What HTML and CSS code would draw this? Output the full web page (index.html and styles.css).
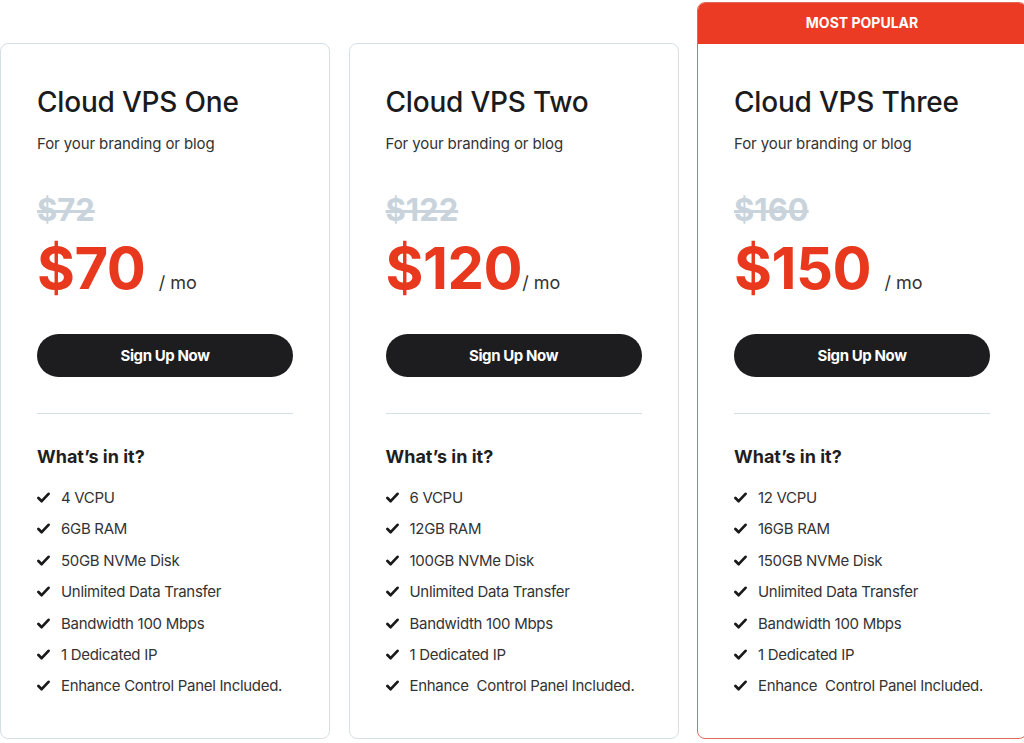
FILE: index.html
```html
<!DOCTYPE html>
<html lang="en">
<head>
  <meta charset="UTF-8" />
  <meta name="viewport" content="width=device-width, initial-scale=1.0"/>
  <title>Cloud VPS Pricing</title>
  <link rel="stylesheet" href="styles.css">
</head>
<body>
  <div class="plans">
    <div class="plan">
      <div class="plan-body">
        <h2 class="plan-name">Cloud VPS One</h2>
        <p class="plan-desc">For your branding or blog</p>
        <div class="old-price">$72</div>
        <div class="price"><span class="amount">$70 </span><span class="period">/ mo</span></div>
        <button class="signup">Sign Up Now</button>
        <hr class="divider">
        <h3 class="features-title">What’s in it?</h3>
        <ul class="features">
          <li><svg viewBox="0 0 14 12"><path d="M1.5 6.5l3.5 3.5 7.5-8"/></svg>4 VCPU</li>
          <li><svg viewBox="0 0 14 12"><path d="M1.5 6.5l3.5 3.5 7.5-8"/></svg>6GB RAM</li>
          <li><svg viewBox="0 0 14 12"><path d="M1.5 6.5l3.5 3.5 7.5-8"/></svg>50GB NVMe Disk</li>
          <li><svg viewBox="0 0 14 12"><path d="M1.5 6.5l3.5 3.5 7.5-8"/></svg>Unlimited Data Transfer</li>
          <li><svg viewBox="0 0 14 12"><path d="M1.5 6.5l3.5 3.5 7.5-8"/></svg>Bandwidth 100 Mbps</li>
          <li><svg viewBox="0 0 14 12"><path d="M1.5 6.5l3.5 3.5 7.5-8"/></svg>1 Dedicated IP</li>
          <li><svg viewBox="0 0 14 12"><path d="M1.5 6.5l3.5 3.5 7.5-8"/></svg>Enhance Control Panel Included.</li>
        </ul>
      </div>
    </div>

    <div class="plan">
      <div class="plan-body">
        <h2 class="plan-name">Cloud VPS Two</h2>
        <p class="plan-desc">For your branding or blog</p>
        <div class="old-price">$122</div>
        <div class="price"><span class="amount">$120</span><span class="period">/ mo</span></div>
        <button class="signup">Sign Up Now</button>
        <hr class="divider">
        <h3 class="features-title">What’s in it?</h3>
        <ul class="features">
          <li><svg viewBox="0 0 14 12"><path d="M1.5 6.5l3.5 3.5 7.5-8"/></svg>6 VCPU</li>
          <li><svg viewBox="0 0 14 12"><path d="M1.5 6.5l3.5 3.5 7.5-8"/></svg>12GB RAM</li>
          <li><svg viewBox="0 0 14 12"><path d="M1.5 6.5l3.5 3.5 7.5-8"/></svg>100GB NVMe Disk</li>
          <li><svg viewBox="0 0 14 12"><path d="M1.5 6.5l3.5 3.5 7.5-8"/></svg>Unlimited Data Transfer</li>
          <li><svg viewBox="0 0 14 12"><path d="M1.5 6.5l3.5 3.5 7.5-8"/></svg>Bandwidth 100 Mbps</li>
          <li><svg viewBox="0 0 14 12"><path d="M1.5 6.5l3.5 3.5 7.5-8"/></svg>1 Dedicated IP</li>
          <li><svg viewBox="0 0 14 12"><path d="M1.5 6.5l3.5 3.5 7.5-8"/></svg>Enhance&nbsp; Control Panel Included.</li>
        </ul>
      </div>
    </div>

    <div class="plan popular">
      <div class="badge">MOST POPULAR</div>
      <div class="plan-body">
        <h2 class="plan-name">Cloud VPS Three</h2>
        <p class="plan-desc">For your branding or blog</p>
        <div class="old-price">$160</div>
        <div class="price"><span class="amount">$150 </span><span class="period">/ mo</span></div>
        <button class="signup">Sign Up Now</button>
        <hr class="divider">
        <h3 class="features-title">What’s in it?</h3>
        <ul class="features">
          <li><svg viewBox="0 0 14 12"><path d="M1.5 6.5l3.5 3.5 7.5-8"/></svg>12 VCPU</li>
          <li><svg viewBox="0 0 14 12"><path d="M1.5 6.5l3.5 3.5 7.5-8"/></svg>16GB RAM</li>
          <li><svg viewBox="0 0 14 12"><path d="M1.5 6.5l3.5 3.5 7.5-8"/></svg>150GB NVMe Disk</li>
          <li><svg viewBox="0 0 14 12"><path d="M1.5 6.5l3.5 3.5 7.5-8"/></svg>Unlimited Data Transfer</li>
          <li><svg viewBox="0 0 14 12"><path d="M1.5 6.5l3.5 3.5 7.5-8"/></svg>Bandwidth 100 Mbps</li>
          <li><svg viewBox="0 0 14 12"><path d="M1.5 6.5l3.5 3.5 7.5-8"/></svg>1 Dedicated IP</li>
          <li><svg viewBox="0 0 14 12"><path d="M1.5 6.5l3.5 3.5 7.5-8"/></svg>Enhance&nbsp; Control Panel Included.</li>
        </ul>
      </div>
    </div>
  </div>
</body>
</html>
```

FILE: styles.css
```css
body {
  margin: 0;
  background: #ffffff;
  font-family: Inter, "Noto Sans", sans-serif;
  color: #222;
  overflow: hidden;
}

.plans {
  display: flex;
  align-items: flex-end;
  gap: 18.5px;
  padding-top: 2px;
  width: 1100px;
}

.plan {
  width: 330px;
  flex: none;
  box-sizing: border-box;
  border: 1px solid #d5e0e5;
  border-radius: 8px;
  background: #fff;
  overflow: hidden;
}

.popular {
  border-color: #e06a5a;
}

.badge {
  background: #ec3b24;
  color: #fff;
  font-weight: 700;
  font-size: 14px;
  text-align: center;
  height: 41px;
  line-height: 40px;
}

.plan-body {
  padding: 41px 36px 42px;
}

.plan-name {
  margin: 0;
  font-size: 28px;
  line-height: 34px;
  font-weight: 500;
  color: #1b1b1d;
  letter-spacing: -0.2px;
}

.plan-desc {
  margin: 14px 0 0;
  font-size: 15px;
  line-height: 22px;
  color: #333;
  letter-spacing: -0.1px;
}

.old-price {
  margin-top: 36px;
  font-size: 31px;
  line-height: 37px;
  font-weight: 700;
  color: #c9d3dc;
  text-decoration: line-through;
  text-decoration-thickness: 3px;
}

.price {
  margin-top: 11px;
  height: 58px;
  display: flex;
  align-items: baseline;
}

.amount {
  font-size: 58px;
  line-height: 58px;
  font-weight: 700;
  color: #e8391f;
  letter-spacing: -0.5px;
  white-space: pre;
}

.period {
  font-size: 18px;
  color: #333;
}

.signup {
  display: block;
  width: 100%;
  height: 43px;
  margin-top: 37px;
  border: none;
  border-radius: 22px;
  background: #1d1d1f;
  color: #fff;
  font-family: inherit;
  font-size: 15px;
  font-weight: 700;
  letter-spacing: -0.4px;
  cursor: pointer;
}

.divider {
  margin: 36px 0 0;
  border: none;
  border-top: 1px solid #d4dfe4;
}

.features-title {
  margin: 31px 0 0;
  font-size: 18px;
  line-height: 24px;
  font-weight: 700;
  color: #1f1f1f;
}

.features {
  list-style: none;
  margin: 18px 0 0;
  padding: 0;
}

.features li {
  display: flex;
  align-items: center;
  gap: 11px;
  font-size: 15px;
  line-height: 21px;
  color: #333;
  letter-spacing: -0.3px;
  white-space: nowrap;
  margin-bottom: 10.4px;
}

.features li:last-child {
  margin-bottom: 0;
}

.features svg {
  width: 13px;
  height: 11px;
  flex: none;
  fill: none;
  stroke: #1a1a1a;
  stroke-width: 3;
  stroke-linecap: round;
  stroke-linejoin: round;
}
```
